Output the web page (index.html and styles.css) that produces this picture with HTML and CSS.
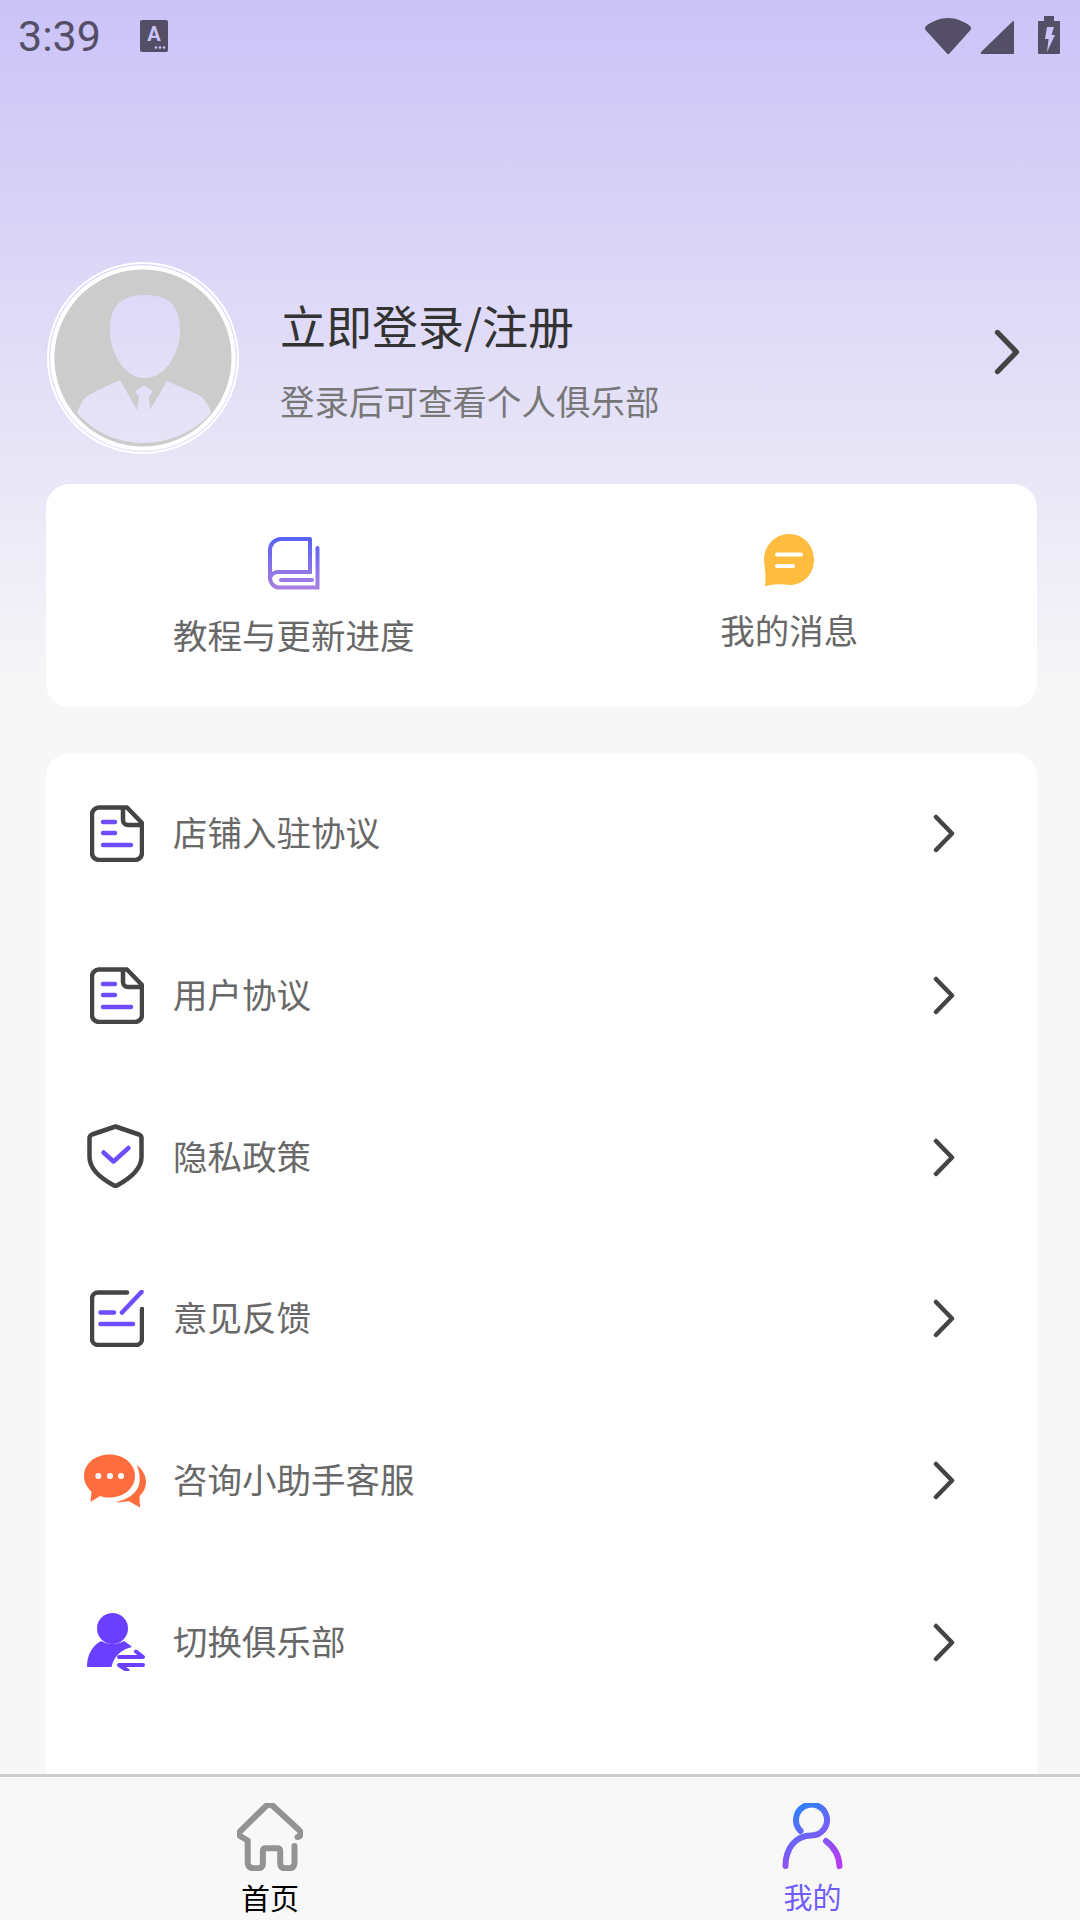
FILE: index.html
```html
<!DOCTYPE html>
<html lang="zh-CN">
<head>
    <meta charset="UTF-8">
    <meta name="viewport" content="width=device-width, initial-scale=1.0">
    <title>我的</title>
    <link rel="stylesheet" href="styles.css">
</head>
<body>
    <svg class="defs" width="0" height="0">
        <defs>
            <linearGradient id="bookGrad" x1="0" y1="0" x2="0" y2="1">
                <stop offset="0" stop-color="#5a62f6"/>
                <stop offset="1" stop-color="#a77fe0"/>
            </linearGradient>
            <linearGradient id="personGrad" gradientUnits="userSpaceOnUse" x1="18" y1="4" x2="52" y2="62">
                <stop offset="0" stop-color="#3080ff"/>
                <stop offset="0.5" stop-color="#7a5cf5"/>
                <stop offset="1" stop-color="#b63cf0"/>
            </linearGradient>
            <symbol id="chevron" viewBox="0 0 22 39">
                <path d="M3 3 L19 19.5 L3 36" fill="none" stroke="#444" stroke-width="4.500" stroke-linecap="round" stroke-linejoin="round"/>
            </symbol>
            <symbol id="doc" viewBox="0 0 54 57">
                <path d="M37 2.500 H9 a7 7 0 0 0 -7 7 V48 a7 7 0 0 0 7 7 H45 a7 7 0 0 0 7 -7 V18 Z" fill="none" stroke="#444" stroke-width="4.500" stroke-linejoin="round"/>
                <path d="M33 3 V15 a5 5 0 0 0 5 5 H52" fill="none" stroke="#444" stroke-width="4.500"/>
                <path d="M13 17 H25 M13 28 H25 M13 40 H41" fill="none" stroke="#6f4dff" stroke-width="4.500" stroke-linecap="round"/>
            </symbol>
        </defs>
    </svg>

    <div class="page">
        <div class="status-bar">
            <span class="time">3:39</span>
            <svg class="status-a" width="28" height="32" viewBox="0 0 28 32">
                <rect width="28" height="32" rx="2" fill="#544f66"/>
                <text x="14" y="21" text-anchor="middle" class="status-a-letter">A</text>
                <circle cx="16" cy="27.500" r="1.300" fill="#cbc3f7"/>
                <circle cx="20" cy="27.500" r="1.300" fill="#cbc3f7"/>
                <circle cx="24" cy="27.500" r="1.300" fill="#cbc3f7"/>
            </svg>
            <div class="status-right">
                <svg width="46" height="36" viewBox="0 0 46 36">
                    <path d="M23 0 C31 0 39 3.500 45 8 Q46.500 9.500 45.500 12 L24 36 H22.500 L0.500 12 Q-0.500 9.500 1 8 C7 3.500 15 0 23 0 Z" fill="#544f66"/>
                </svg>
                <svg width="34" height="34" viewBox="0 0 34 34">
                    <path d="M33 1 Q34 0.500 34 2 V34 H2 Q0 34 1 32 Z" fill="#544f66"/>
                </svg>
                <svg width="22" height="38" viewBox="0 0 22 38">
                    <path d="M6 0 H16 V5 H21 a1 1 0 0 1 1 1 V37 a1 1 0 0 1 -1 1 H1 a1 1 0 0 1 -1 -1 V6 a1 1 0 0 1 1 -1 H6 Z" fill="#544f66"/>
                    <path d="M9 11 H16 L13.500 19 H17 L9 36 L10.500 23 H7 Z" fill="#cbc3f7"/>
                </svg>
            </div>
        </div>

        <div class="content">
            <div class="profile">
                <svg class="avatar" width="192" height="192" viewBox="0 0 192 192">
                    <circle cx="96" cy="96" r="95" fill="none" stroke="#fff" stroke-width="2"/>
                    <circle cx="96" cy="96" r="90.500" fill="none" stroke="#fff" stroke-width="4.500"/>
                    <path fill="#ccc" fill-rule="evenodd" d="M96 7.500 A88.500 88.500 0 1 1 95.900 7.500 Z
                        M98 33 C120 33 133 42 133 68 C133 92 118 116 98 116 C78 116 63 92 63 68 C63 42 76 33 98 33 Z
                        M73 118 L90 148 L92 135 L88 129 L97 123 L106 129 L102 135 L103 148 L120 119 C135 126 150 131 156 136 C160 141 163 146 164 151 C147 170 122 181 96 181 C70 181 47 170 30 151 C32 145 35 139 39 135 C48 129 60 124 73 118 Z"/>
                </svg>
                <div class="profile-text">
                    <div class="profile-title">立即登录/注册</div>
                    <div class="profile-sub">登录后可查看个人俱乐部</div>
                </div>
                <svg class="profile-arrow" width="26" height="50"><use href="#chevron"/></svg>
            </div>

            <div class="card shortcuts">
                <div class="shortcut shortcut-left">
                    <svg width="52" height="53" viewBox="0 0 52 53">
                        <path d="M42 2 H13 A11 11 0 0 0 2 13 V41 A9.500 9.500 0 0 0 11.500 50.500 H49.500 V11 M42 2 V35 H11 A8.500 8.500 0 0 0 2 41 M13 43 H44" fill="none" stroke="url(#bookGrad)" stroke-width="4" stroke-linecap="round"/>
                    </svg>
                    <span>教程与更新进度</span>
                </div>
                <div class="shortcut shortcut-right">
                    <svg width="50" height="52" viewBox="0 0 50 52">
                        <path d="M25 0 C40 0 50 12 50 26 C50 41 38 51 26 51 C18 50 10 50 1 52 C2 44 1 36 0 26 C0 12 11 0 25 0 Z" fill="#ffbc3f"/>
                        <path d="M13 20.500 H37 M13 32 H29" stroke="#fff" stroke-width="4" stroke-linecap="round"/>
                    </svg>
                    <span>我的消息</span>
                </div>
            </div>

            <div class="card menu">
                <div class="menu-row">
                    <div class="menu-icon menu-icon-doc"><svg width="54" height="57"><use href="#doc"/></svg></div>
                    <span>店铺入驻协议</span>
                    <svg class="menu-arrow" width="22" height="39"><use href="#chevron"/></svg>
                </div>
                <div class="menu-row">
                    <div class="menu-icon menu-icon-doc"><svg width="54" height="57"><use href="#doc"/></svg></div>
                    <span>用户协议</span>
                    <svg class="menu-arrow" width="22" height="39"><use href="#chevron"/></svg>
                </div>
                <div class="menu-row">
                    <div class="menu-icon menu-icon-shield">
                        <svg width="57" height="64" viewBox="0 0 57 64">
                            <path d="M28.500 2.500 L52 10.500 Q54.500 11.500 54.500 14 V33 C54.500 46 42 55 30 61.500 Q28.500 62 27 61.500 C15 55 2.500 46 2.500 33 V14 Q2.500 11.500 5 10.500 Z" fill="none" stroke="#444" stroke-width="4.500" stroke-linejoin="round"/>
                            <path d="M16.500 28.500 L26.500 37.500 L41.500 24" fill="none" stroke="#6f4dff" stroke-width="4.500" stroke-linecap="round" stroke-linejoin="round"/>
                        </svg>
                    </div>
                    <span>隐私政策</span>
                    <svg class="menu-arrow" width="22" height="39"><use href="#chevron"/></svg>
                </div>
                <div class="menu-row">
                    <div class="menu-icon menu-icon-doc">
                        <svg width="54" height="57" viewBox="0 0 54 57">
                            <path d="M37 2.500 H8 a6 6 0 0 0 -6 6 V49 a6 6 0 0 0 6 6 H46 a6 6 0 0 0 6 -6 V19" fill="none" stroke="#444" stroke-width="4.500" stroke-linecap="round"/>
                            <path d="M32 22.500 L51.500 2 M10.500 22.500 H24 M10.500 34 H43" fill="none" stroke="#6f4dff" stroke-width="4.500" stroke-linecap="round"/>
                        </svg>
                    </div>
                    <span>意见反馈</span>
                    <svg class="menu-arrow" width="22" height="39"><use href="#chevron"/></svg>
                </div>
                <div class="menu-row">
                    <div class="menu-icon">
                        <svg width="62" height="54" viewBox="0 0 62 54">
                            <path d="M25.500 0.500 C40 0.500 51 10 51 22 C51 34 40 43.500 25.500 43.500 C22 43.500 19 43 16 42 L6.500 48 L7.500 37.500 C3 33.500 0 28 0 22 C0 10 11 0.500 25.500 0.500 Z" fill="#ff6d3e"/>
                            <circle cx="14.300" cy="22" r="3" fill="#fff"/>
                            <circle cx="26" cy="22" r="3" fill="#fff"/>
                            <circle cx="37" cy="22" r="3" fill="#fff"/>
                            <path d="M52.500 11 C58 15 62 21 62 28 C62 33 60 38 55.500 42 L56 53.500 L44.500 47 C41 48 36 48.500 31.500 48 C43 46 52 40 55 31 C56.500 24 55.500 17 52.500 11 Z" fill="#ff6d3e"/>
                        </svg>
                    </div>
                    <span>咨询小助手客服</span>
                    <svg class="menu-arrow" width="22" height="39"><use href="#chevron"/></svg>
                </div>
                <div class="menu-row">
                    <div class="menu-icon">
                        <svg width="59" height="58" viewBox="0 0 59 58">
                            <circle cx="26.500" cy="15.500" r="15.500" fill="#6b3fff"/>
                            <path d="M1 54 C1 42 6 33 15 28 C22 32 31 32 38 28 C41 30 44 32 46 34 C37 36 28 42 25.500 54 H1 Z" fill="#6b3fff"/>
                            <path d="M33 44 H57 L50 38.500 M57 52 H33 L41.500 57.500" fill="none" stroke="#6b3fff" stroke-width="4" stroke-linecap="round" stroke-linejoin="round"/>
                        </svg>
                    </div>
                    <span>切换俱乐部</span>
                    <svg class="menu-arrow" width="22" height="39"><use href="#chevron"/></svg>
                </div>
            </div>
        </div>

        <div class="tabbar">
            <div class="tab">
                <svg width="66" height="68" viewBox="0 0 66 68">
                    <path d="M60.500 34 Q63.500 33.500 63.500 30 Q63.500 28.500 62 27 L36 3 Q32.500 0.500 29 3 L3.500 28 Q1 30.500 3 33 L10.700 37.500 V59 Q10.700 65.300 17 65.300 H21 Q25.900 65.300 25.900 60 V48 Q25.900 45.300 29 45.300 H40 Q43.200 45.300 43.200 48 V60 Q43.200 65.300 48 65.300 H52 Q57.500 65.300 57.500 59 V43" fill="none" stroke="#939393" stroke-width="6" stroke-linecap="round" stroke-linejoin="round"/>
                </svg>
                <span class="tab-label">首页</span>
            </div>
            <div class="tab tab-active">
                <svg width="62" height="67" viewBox="0 0 62 67">
                    <path d="M18.600 28 A15.500 15.500 0 1 1 29.500 32.500 C13 32.500 3.500 46 3.500 63 M44 38 C52 44 57 52 57.500 63" fill="none" stroke="url(#personGrad)" stroke-width="6" stroke-linecap="round"/>
                </svg>
                <span class="tab-label">我的</span>
            </div>
        </div>
    </div>
</body>
</html>
```

FILE: styles.css
```css
* {
    box-sizing: border-box;
    margin: 0;
    padding: 0;
}

body {
    font-family: "Noto Sans CJK SC", "Noto Sans", sans-serif;
    background-color: #f7f7f7;
}

svg {
    display: block;
    flex-shrink: 0;
}

.defs {
    position: absolute;
}

.page {
    width: 1080px;
    height: 1920px;
    display: flex;
    flex-direction: column;
    overflow: hidden;
    background: linear-gradient(#cbc3f7, #f7f7f7 700px);
}

/* status bar */
.status-bar {
    height: 72px;
    display: flex;
    align-items: center;
    padding: 0 20px 0 18px;
}

.time {
    font-family: Roboto, sans-serif;
    font-size: 43px;
    color: #544f66;
}

.status-a {
    margin-left: 39px;
}

.status-a-letter {
    font-family: Roboto, sans-serif;
    font-size: 20px;
    font-weight: 700;
    fill: #cbc3f7;
}

.status-right {
    margin-left: auto;
    display: flex;
    align-items: flex-end;
    gap: 9px;
    padding-bottom: 3px;
}

.status-right svg:last-child {
    margin-left: 15px;
}

/* header */
.content {
    flex: 1;
    padding: 190px 43px 0 47px;
    overflow: hidden;
}

.profile {
    display: flex;
    align-items: center;
    margin-bottom: 30px;
}

.avatar {
    margin-right: 41px;
}

.profile-text {
    flex: 1;
}

.profile-title {
    font-size: 46px;
    line-height: 64px;
    color: #333;
}

.profile-sub {
    font-size: 34.5px;
    line-height: 50px;
    margin-top: 19px;
    color: #777;
}

.profile-arrow {
    margin: 0 17px 12px 0;
}

.card {
    background-color: #fff;
    border-radius: 24px;
    margin-left: -1px;
}

/* shortcuts */
.shortcuts {
    height: 223px;
    display: grid;
    grid-template-columns: 1fr 1fr;
    margin-bottom: 46px;
}

.shortcut {
    display: flex;
    flex-direction: column;
    align-items: center;
    font-size: 34.5px;
    line-height: 50px;
    color: #686868;
}

.shortcut-left {
    padding-top: 53px;
    gap: 19px;
}

.shortcut-right {
    padding-top: 50px;
    gap: 18px;
}

/* menu */
.menu {
    height: 1100px;
    border-radius: 24px 24px 0 0;
}

.menu-row {
    height: 161.7px;
    display: flex;
    align-items: center;
    padding: 0 82px 0 38px;
    font-size: 34.5px;
    color: #686868;
}

.menu-row span {
    margin-bottom: 5px;
}

.menu-icon {
    width: 62px;
    margin-right: 27px;
    display: flex;
    justify-content: center;
}

.menu-icon-doc {
    padding-left: 4px;
}

.menu-icon-shield {
    margin-bottom: 3px;
}

.menu-arrow {
    margin-left: auto;
}

/* bottom tabs */
.tabbar {
    height: 146px;
    flex-shrink: 0;
    display: grid;
    grid-template-columns: 1fr 1fr;
    background-color: #f8f8f8;
    border-top: 3px solid #ccc;
}

.tab {
    display: flex;
    flex-direction: column;
    align-items: center;
    padding-top: 26px;
}

.tab-active {
    padding-left: 5px;
}

.tab-label {
    font-size: 29px;
    line-height: 40px;
    margin-top: 6px;
    color: #000;
}

.tab-active .tab-label {
    color: #6f5cff;
}
```
